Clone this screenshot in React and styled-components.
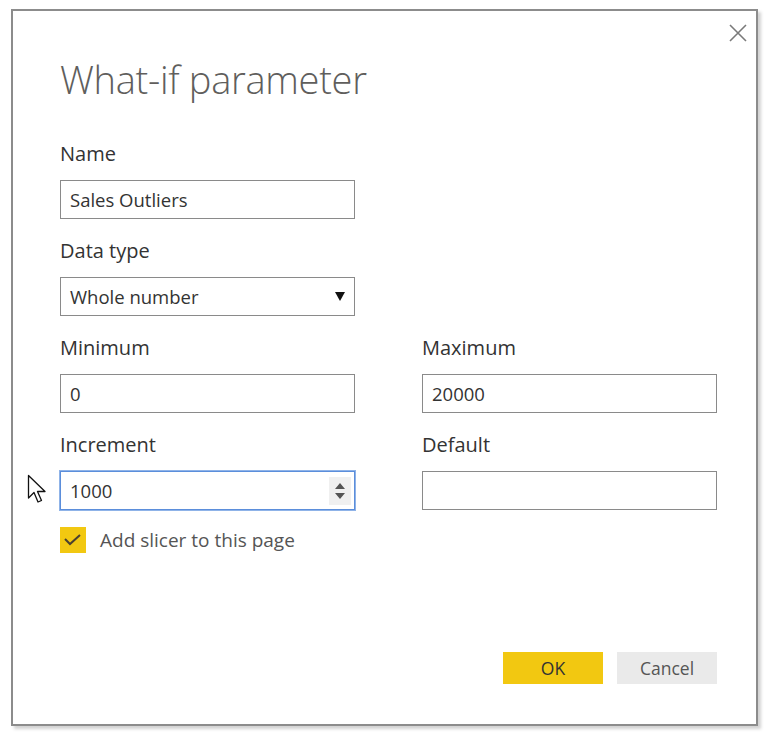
import React from 'react'
import styled, {createGlobalStyle, css} from 'styled-components'

const GlobalStyle = createGlobalStyle`
  html, body {
    margin: 0;
    background: #ffffff;
  }
  body {
    font-family: "Open Sans", "Noto Sans", "DejaVu Sans", sans-serif;
    color: #333333;
  }
  * {
    box-sizing: border-box;
  }
`

const Page = styled.div`
  position: relative;
  padding: 9px 0 0 11px;
  height: 743px;
`

const Dialog = styled.div`
  position: relative;
  width: 747px;
  height: 717px;
  border: 2px solid #8c8c8c;
  box-shadow: 3px 3px 3px rgba(0, 0, 0, 0.18);
  background: #fff;
  padding: 45px 39px 40px 47px;
  display: flex;
  flex-direction: column;
`

const CloseButton = styled.button`
  position: absolute;
  top: 13px;
  right: 9px;
  width: 18px;
  height: 18px;
  padding: 0;
  border: none;
  background: none;
  cursor: pointer;
  display: flex;
`

const Title = styled.h1`
  margin: 0 0 40px;
  font-weight: 300;
  font-size: 38px;
  line-height: 46px;
  color: #605e5c;
  letter-spacing: -0.3px;
`

const FieldGrid = styled.div`
  display: grid;
  grid-template-columns: 295px 295px;
  column-gap: 67px;
  row-gap: 20px;
`

const Field = styled.div`
  display: flex;
  flex-direction: column;
  gap: 14px;
  grid-column: ${props => props.col || 'auto'};
`

const Label = styled.label`
  font-size: 20px;
  line-height: 24px;
  color: #333;
`

const Box = styled.div`
  display: flex;
  align-items: center;
  height: 39px;
  border: 1px solid ${props => props.focused ? '#5b8edb' : '#8a8a8a'};
  ${props => props.focused && css`
    box-shadow: 0 0 0 1px #8fb3e8;
  `}
  background: #fff;
  padding: 0 3px 0 9px;
`

const Value = styled.input`
  flex: 1;
  min-width: 0;
  border: none;
  outline: none;
  padding: 0;
  background: transparent;
  font-family: inherit;
  font-size: 18.5px;
  color: #333;
`

const SelectText = styled.span`
  flex: 1;
  font-size: 18.5px;
  color: #333;
`

const Arrow = styled.span`
  display: flex;
  margin-right: 6px;
`

const Spinner = styled.span`
  display: flex;
  align-items: center;
  justify-content: center;
  width: 22px;
  height: 28px;
  background: #f0f0f0;
`

const CheckRow = styled.div`
  display: flex;
  align-items: center;
  gap: 14px;
  margin-top: 17px;
`

const CheckBox = styled.span`
  display: flex;
  width: 26px;
  height: 26px;
  background: #f2c811;
`

const CheckLabel = styled.span`
  font-size: 19px;
  color: #555;
`

const Footer = styled.div`
  margin-top: auto;
  display: flex;
  justify-content: flex-end;
  gap: 14px;
`

const Button = styled.button`
  width: 100px;
  height: 32px;
  border: none;
  font-family: inherit;
  font-size: 17.5px;
  cursor: pointer;
  background: ${props => props.primary ? '#f2c811' : '#eaeaea'};
  color: ${props => props.primary ? '#333' : '#555'};
`

const Cursor = styled.svg`
  position: absolute;
  left: 27px;
  top: 474px;
`

const App = () => {
  return (
    <Page>
      <GlobalStyle/>
      <Dialog>
        <CloseButton aria-label="Close">
          <svg width="18" height="18" viewBox="0 0 18 18">
            <path d="M1 1 L17 17 M17 1 L1 17" stroke="#7a7a7a" strokeWidth="1.6" fill="none"/>
          </svg>
        </CloseButton>

        <Title>What-if parameter</Title>

        <FieldGrid>
          <Field col="1">
            <Label>Name</Label>
            <Box><Value readOnly defaultValue="Sales Outliers"/></Box>
          </Field>
          <Field col="1">
            <Label>Data type</Label>
            <Box>
              <SelectText>Whole number</SelectText>
              <Arrow>
                <svg width="10" height="9" viewBox="0 0 10 9">
                  <path d="M0 0 H10 L5 9 Z" fill="#111"/>
                </svg>
              </Arrow>
            </Box>
          </Field>
          <Field col="1">
            <Label>Minimum</Label>
            <Box><Value readOnly defaultValue="0"/></Box>
          </Field>
          <Field col="2">
            <Label>Maximum</Label>
            <Box><Value readOnly defaultValue="20000"/></Box>
          </Field>
          <Field col="1">
            <Label>Increment</Label>
            <Box focused>
              <Value readOnly defaultValue="1000"/>
              <Spinner>
                <svg width="10" height="16" viewBox="0 0 10 16">
                  <path d="M0 6 H10 L5 0 Z M0 10 H10 L5 16 Z" fill="#555"/>
                </svg>
              </Spinner>
            </Box>
          </Field>
          <Field col="2">
            <Label>Default</Label>
            <Box><Value readOnly defaultValue=""/></Box>
          </Field>
        </FieldGrid>

        <CheckRow>
          <CheckBox>
            <svg width="26" height="26" viewBox="0 0 26 26">
              <path d="M5 12 L10 17 L20 8" stroke="#4a4030" strokeWidth="2" fill="none"/>
            </svg>
          </CheckBox>
          <CheckLabel>Add slicer to this page</CheckLabel>
        </CheckRow>

        <Footer>
          <Button primary>OK</Button>
          <Button>Cancel</Button>
        </Footer>
      </Dialog>

      <Cursor width="22" height="32" viewBox="0 0 22 32">
        <path d="M1.5 1.5 L1.5 24 L7 18.5 L11 28 L14.5 26.5 L10.5 17.5 L18 17.5 Z"
              fill="#fff" stroke="#111" strokeWidth="1.3" strokeLinejoin="round"/>
      </Cursor>
    </Page>
  )
}

export default App
